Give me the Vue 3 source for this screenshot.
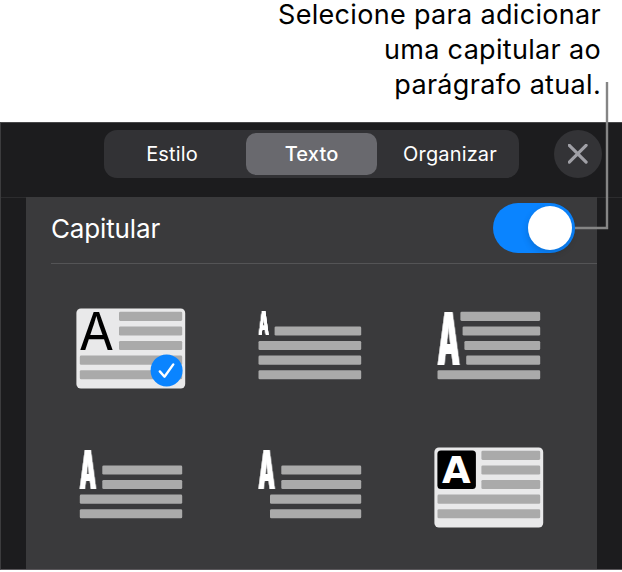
<script setup>
import { ref } from 'vue'

const tabs = ['Estilo', 'Texto', 'Organizar']
const activeTab = ref('Texto')
const enabled = ref(true)
const selected = ref(0)

// Vertical offsets of the five text lines inside a thumbnail
const rows = [3.8, 18.4, 33, 47.6, 62.2]
const right = 106.2

// starts: left edge of each line, null when the line is absent
const styles = [
  { card: true, starts: [43, 43, 43, 3.8, 3.8], glyph: { kind: 'thin', x: 2.9, y: 41.9, size: 52.2, sx: 0.97 } },
  { starts: [null, 19.6, 3.5, 3.5, 3.5], glyph: { kind: 'tall', x: 3.7, y: 27.3, size: 32.4, sx: 0.41 } },
  { starts: [26.4, 28.6, 30.4, 32.2, 3.5], glyph: { kind: 'tall', x: 3.7, y: 56.8, size: 73, sx: 0.395 } },
  { starts: [null, 26.3, 26.3, 3.8, 3.8], glyph: { kind: 'tall', x: 4.1, y: 41.9, size: 53.4, sx: 0.395 } },
  { starts: [null, 26.3, 26.3, 15, 15], glyph: { kind: 'tall', x: 3.7, y: 41.9, size: 53.4, sx: 0.395 } },
  { card: true, boxed: true, starts: [47.4, 47.4, 47.4, 3.5, 3.5], glyph: { kind: 'wide', x: 8, y: 35.8, size: 37, sx: 1 } },
]
</script>

<template>
  <div class="page">
    <p class="callout">Selecione para adicionar<br />uma capitular ao<br />parágrafo atual.</p>

    <section class="panel">
      <header class="bar">
        <nav class="segmented">
          <button
            v-for="tab in tabs"
            :key="tab"
            :class="{ active: tab === activeTab }"
            @click="activeTab = tab"
          >{{ tab }}</button>
        </nav>
        <button class="close">
          <svg width="20" height="20" viewBox="0 0 20 20">
            <path d="M1.3 1.3 18.1 18.1M18.1 1.3 1.3 18.1" />
          </svg>
        </button>
      </header>

      <div class="content">
        <div class="setting">
          <span class="label">Capitular</span>
          <button class="switch" :class="{ on: enabled }" @click="enabled = !enabled">
            <span class="knob"></span>
          </button>
        </div>

        <div class="styles">
          <svg
            v-for="(s, i) in styles"
            :key="i"
            class="thumb"
            width="110"
            height="82"
            viewBox="0 0 110 82"
            @click="selected = i"
          >
            <rect v-if="s.card" class="card" x="0.4" y="0.5" width="108.8" height="80" rx="4.5" />
            <template v-for="(x, r) in s.starts" :key="r">
              <rect v-if="x !== null" class="line" :x="x" :y="rows[r]" :width="right - x" height="9.1" rx="1.3" />
            </template>
            <rect v-if="s.boxed" class="box" x="3.4" y="3.5" width="38.5" height="38.5" rx="3.5" />
            <text
              :class="s.glyph.kind"
              :font-size="s.glyph.size"
              :transform="`translate(${s.glyph.x} ${s.glyph.y}) scale(${s.glyph.sx} 1)`"
            >A</text>
            <g v-if="selected === i" class="check">
              <circle cx="90.6" cy="62.4" r="16" />
              <path d="M83.8 63.4 88.5 68.7 97.3 56.4" />
            </g>
          </svg>
        </div>
      </div>
    </section>

    <svg class="leader" width="36" height="150" viewBox="0 0 36 150">
      <path d="M0 146H32V0" />
    </svg>
  </div>
</template>

<style>
body {
  background: #fff;
}
</style>

<style scoped>
.page {
  position: relative;
  display: flow-root;
  width: 622px;
  height: 572px;
  overflow: hidden;
  background: #fff;
  font-family: Inter, "Liberation Sans", sans-serif;
}

button {
  border: 0;
  margin: 0;
  padding: 0;
  font: inherit;
  color: inherit;
}

.callout {
  height: 125px;
  margin: -3px 0 0;
  padding-right: 21px;
  font-size: 27px;
  line-height: 35px;
  letter-spacing: 0.32px;
  text-align: right;
  color: #000;
  white-space: nowrap;
}

.panel {
  box-sizing: border-box;
  display: flex;
  flex-direction: column;
  height: 448px;
  border-top: 1px solid #48484a;
  border-left: 1px solid #3c3c3e;
  border-bottom: 1px solid #59565a;
  background: #1c1c1e;
  color: #fff;
}

.bar {
  box-sizing: border-box;
  display: flex;
  align-items: flex-start;
  gap: 35px;
  height: 75px;
  padding: 7px 0 0 103px;
  border-bottom: 1px solid #2c2c2e;
}

.segmented {
  box-sizing: border-box;
  display: grid;
  grid-template-columns: 130px 149px 128px;
  width: 415px;
  height: 48px;
  padding: 3px;
  border-radius: 13px;
  background: #323235;
}

.segmented button {
  height: 42px;
  border-radius: 10px;
  background: none;
  font-size: 20px;
  letter-spacing: 0.15px;
}

.segmented .active {
  justify-self: center;
  width: 131px;
  background: #69696e;
  font-weight: 500;
}

.close {
  display: flex;
  align-items: center;
  justify-content: center;
  width: 48px;
  height: 48px;
  border-radius: 50%;
  background: #333336;
}

.close path {
  fill: none;
  stroke: #a0a0a6;
  stroke-width: 3.2;
  stroke-linecap: round;
}

.content {
  flex: 1;
  box-sizing: border-box;
  width: 571px;
  margin: -1px 0 0 25px;
  padding-left: 25px;
  background: #3a3a3c;
}

.setting {
  box-sizing: border-box;
  display: flex;
  align-items: center;
  justify-content: space-between;
  height: 67px;
  padding: 0 22px 4px 0;
  border-bottom: 1px solid #545456;
}

.label {
  padding-top: 1px;
  font-size: 26px;
  letter-spacing: -0.15px;
}

.switch {
  box-sizing: border-box;
  display: flex;
  width: 82px;
  height: 50px;
  padding: 3px;
  border-radius: 25px;
  background: #636366;
}

.switch.on {
  justify-content: flex-end;
  background: #0a84ff;
}

.knob {
  width: 44px;
  height: 44px;
  border-radius: 50%;
  background: #fff;
  box-shadow: 0 3px 7px rgba(0, 0, 0, 0.16);
}

.styles {
  display: grid;
  grid-template-columns: repeat(3, 110px);
  column-gap: 69px;
  row-gap: 57px;
  padding: 44px 0 0 25px;
}

.thumb {
  display: block;
  overflow: visible;
}

.card {
  fill: #e9e9ea;
}

.line {
  fill: #aaa;
}

.box {
  fill: #000;
}

.thin {
  fill: #000;
  font-family: Inter, sans-serif;
  font-weight: 400;
}

.tall {
  fill: #fff;
  font-family: Inter, sans-serif;
  font-weight: 800;
  filter: drop-shadow(0.024em 0 0 #fff) drop-shadow(-0.024em 0 0 #fff);
}

.wide {
  fill: #fff;
  font-family: "DejaVu Sans", sans-serif;
  font-weight: 700;
}

.check circle {
  fill: #0a84ff;
}

.check path {
  fill: none;
  stroke: #fff;
  stroke-width: 2.4;
  stroke-linecap: round;
  stroke-linejoin: round;
}

.leader {
  position: absolute;
  left: 575px;
  top: 82px;
}

.leader path {
  fill: none;
  stroke: #858585;
  stroke-width: 2.4;
}
</style>
